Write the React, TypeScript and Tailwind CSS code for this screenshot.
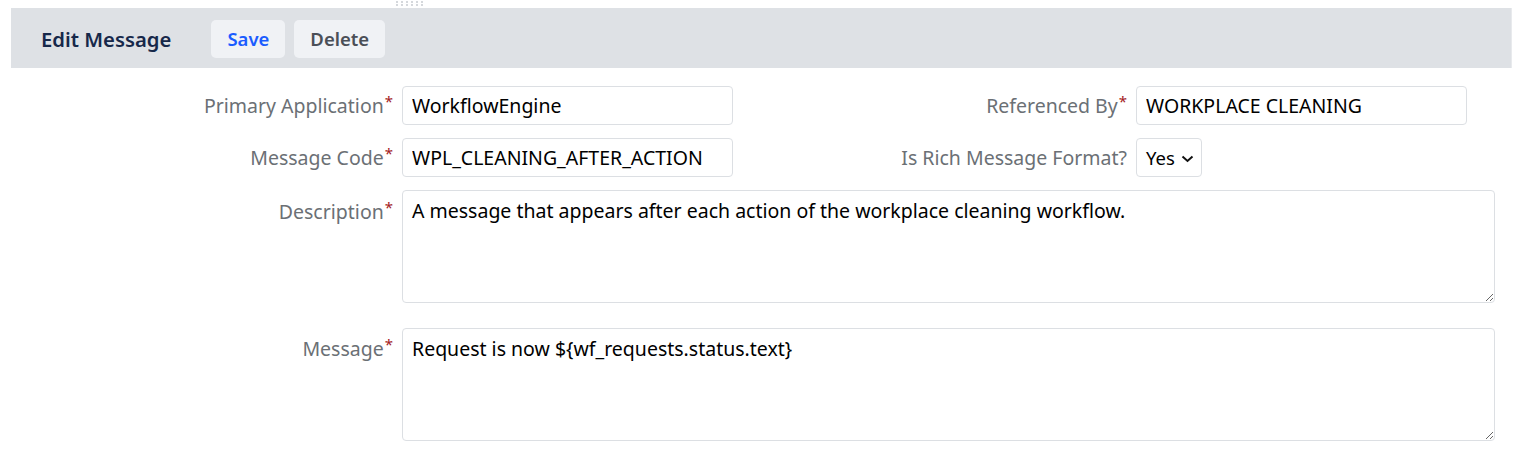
import React from "react";

function Label({ text, className = "" }: { text: string; className?: string }) {
  return (
    <div className={"text-right text-[19.5px] text-[#6b7075] " + className}>
      {text}
      <span className="text-[#a3201c] text-[15px] align-top relative top-[-1px] ml-[1px]">*</span>
    </div>
  );
}

const inputCls =
  "h-[39px] border border-[#dcdfe3] rounded-[4px] px-[9px] text-[19.5px] text-black bg-white outline-none";

export default function App() {
  return (
    <div className="w-[1526px] h-[453px] bg-white relative" style={{ fontFamily: '"Noto Sans", sans-serif' }}>
      <div className="absolute left-[396px] top-[1px] grid grid-cols-6 gap-x-[3px] gap-y-[1px]">
        {Array.from({ length: 12 }).map((_, i) => (
          <div key={i} className="w-[2px] h-[2px] bg-[#d5d8dc]" />
        ))}
      </div>
      <div className="pt-[8px] pl-[11px] pr-[14px]">
        <div className="h-[60px] bg-[#dee1e5] border-r border-[#e8eaed] flex items-center pl-[30px]">
          <div className="text-[20.3px] font-semibold text-[#16284a] mr-[40px] mt-[2px]">Edit Message</div>
          <button className="h-[38px] px-[16px] rounded-[5px] bg-[#f0f2f5] text-[#1a5cff] text-[18.5px] font-semibold mr-[9px] mt-[2px]">
            Save
          </button>
          <button className="h-[38px] px-[16px] rounded-[5px] bg-[#f0f2f5] text-[#4a4f57] text-[18.5px] font-semibold mt-[2px]">
            Delete
          </button>
        </div>
      </div>
      <div className="pt-[18px]">
        <div className="flex items-center h-[39px]">
          <Label text="Primary Application" className="w-[393px]" />
          <input className={inputCls + " ml-[9px] w-[331px]"} defaultValue="WorkflowEngine" />
          <Label text="Referenced By" className="w-[394px]" />
          <input className={inputCls + " ml-[9px] w-[331px]"} defaultValue="WORKPLACE CLEANING" />
        </div>
        <div className="flex items-center h-[39px] mt-[13px]">
          <Label text="Message Code" className="w-[393px]" />
          <input className={inputCls + " ml-[9px] w-[331px]"} defaultValue="WPL_CLEANING_AFTER_ACTION" />
          <div className="w-[394px] text-right text-[19.5px] text-[#6b7075]">Is Rich Message Format?</div>
          <div className={inputCls + " ml-[9px] w-[66px] flex items-center !pr-[4px]"}>
            <span className="shrink-0 text-[18.5px]">Yes</span>
            <svg width="13" height="13" viewBox="0 0 13 13" className="ml-[6px] mt-[1px] shrink-0">
              <path d="M1.5 4.5l5 4.5 5-4.5" fill="none" stroke="#111" strokeWidth="2" />
            </svg>
          </div>
        </div>
        <div className="flex items-start mt-[13px]">
          <Label text="Description" className="w-[393px] pt-[7px]" />
          <textarea
            className="ml-[9px] w-[1093px] h-[113px] border border-[#dcdfe3] rounded-[4px] px-[9px] pt-[7px] text-[19.5px] leading-[26px] text-black outline-none block"
            defaultValue="A message that appears after each action of the workplace cleaning workflow."
          />
        </div>
        <div className="flex items-start mt-[25px]">
          <Label text="Message" className="w-[393px] pt-[6px]" />
          <textarea
            className="ml-[9px] w-[1093px] h-[113px] border border-[#dcdfe3] rounded-[4px] px-[9px] pt-[7px] text-[19.5px] leading-[26px] text-black outline-none block"
            defaultValue={"Request is now ${wf_requests.status.text}"}
          />
        </div>
      </div>
    </div>
  );
}
